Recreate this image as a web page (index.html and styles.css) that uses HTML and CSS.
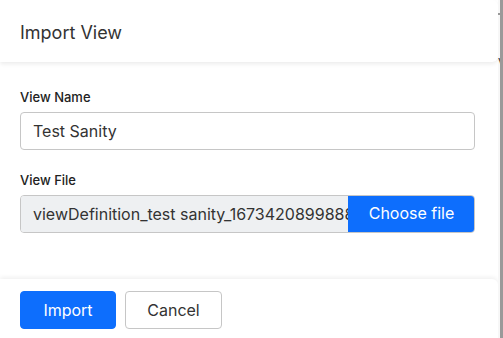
FILE: index.html
```html
<!DOCTYPE html>
<html lang="en">

<head>
    <meta charset="UTF-8">
    <meta name="viewport" content="width=device-width, initial-scale=1.0">
    <title>Import View</title>
    <link rel="stylesheet" href="styles.css">
</head>

<body>
    <div class="page">
        <div class="modal">
            <div class="modal-header">
                <h5>Import View</h5>
            </div>
            <div class="modal-body">
                <div class="field">
                    <label>View Name</label>
                    <input class="text-input" type="text" value="Test Sanity" />
                </div>
                <div class="field">
                    <label>View File</label>
                    <div class="file-input">
                        <span class="file-name">viewDefinition_test sanity_1673420899888929.json</span>
                        <span class="file-btn">Choose file</span>
                    </div>
                </div>
            </div>
            <div class="modal-footer">
                <button class="btn btn-primary">Import</button>
                <button class="btn btn-light">Cancel</button>
            </div>
        </div>
        <div class="backdrop">
            <span class="backdrop-line"></span>
            <span class="backdrop-text">V</span>
        </div>
        <div class="scrollbar"></div>
    </div>
</body>

</html>
```

FILE: styles.css
```css
* {
    box-sizing: border-box;
}

html,
body {
    margin: 0;
    height: 100%;
    overflow: hidden;
}

body {
    font-family: Inter, "Noto Sans", sans-serif;
    color: #333;
    background: #f4f4f4;
}

.page {
    display: flex;
    height: 338px;
}

.modal {
    width: 498px;
    flex-shrink: 0;
    background: #fff;
    display: flex;
    flex-direction: column;
    overflow: hidden;
}

.modal-header {
    height: 62px;
    flex-shrink: 0;
    padding: 0 20px;
    display: flex;
    align-items: center;
    border-radius: 0 6px 6px 0;
    box-shadow: 0 2px 4px rgba(0, 0, 0, 0.08);
    position: relative;
    z-index: 1;
}

.modal-header h5 {
    margin: 0;
    font-size: 18px;
    font-weight: 400;
    color: #333;
    padding-top: 2px;
}

.modal-body {
    padding: 27px 23px 0 20px;
    height: 217px;
    flex-shrink: 0;
}

.field {
    margin-bottom: 22px;
}

.field label {
    display: block;
    font-size: 13px;
    font-weight: 500;
    color: #222;
    margin-bottom: 7px;
    line-height: 16px;
}

.text-input {
    width: 100%;
    height: 38px;
    border: 1px solid #c6c6c6;
    border-radius: 4px;
    padding: 0 12px;
    font-family: inherit;
    font-size: 16px;
    color: #333;
    outline: none;
}

.file-input {
    display: flex;
    height: 38px;
    border: 1px solid #c6c6c6;
    border-radius: 4px;
    overflow: hidden;
    font-size: 16px;
}

.file-name {
    flex: 1;
    min-width: 0;
    background: #eef0f2;
    padding: 0 12px;
    line-height: 36px;
    white-space: nowrap;
    overflow: hidden;
    color: #333;
}

.file-btn {
    width: 127px;
    flex-shrink: 0;
    background: #0d6efd;
    color: #fff;
    text-align: center;
    line-height: 36px;
    margin: -1px -1px -1px 0;
    height: 38px;
}

.modal-footer {
    height: 70px;
    flex-shrink: 0;
    padding: 12px 20px;
    display: flex;
    align-items: flex-start;
    gap: 9px;
    border-radius: 0 6px 0 0;
    box-shadow: 0 -2px 4px rgba(0, 0, 0, 0.06);
}

.btn {
    height: 38px;
    padding: 0;
    border-radius: 4px;
    font-family: inherit;
    font-size: 16px;
    cursor: pointer;
}

.btn-primary {
    width: 96px;
    background: #0d6efd;
    border: 1px solid #0d6efd;
    color: #fff;
}

.btn-light {
    width: 97px;
    background: #fff;
    border: 1px solid #c6c6c6;
    color: #333;
}

.backdrop {
    width: 2px;
    background: #f7f7f7;
    overflow: hidden;
}

.backdrop-line {
    display: block;
    margin-top: 13px;
    height: 2px;
    background: #999;
}

.backdrop-text {
    display: block;
    margin-top: 42px;
    font-size: 12px;
    line-height: 12px;
    color: #333;
}

.scrollbar {
    flex: 1;
    background: #999;
}
```
